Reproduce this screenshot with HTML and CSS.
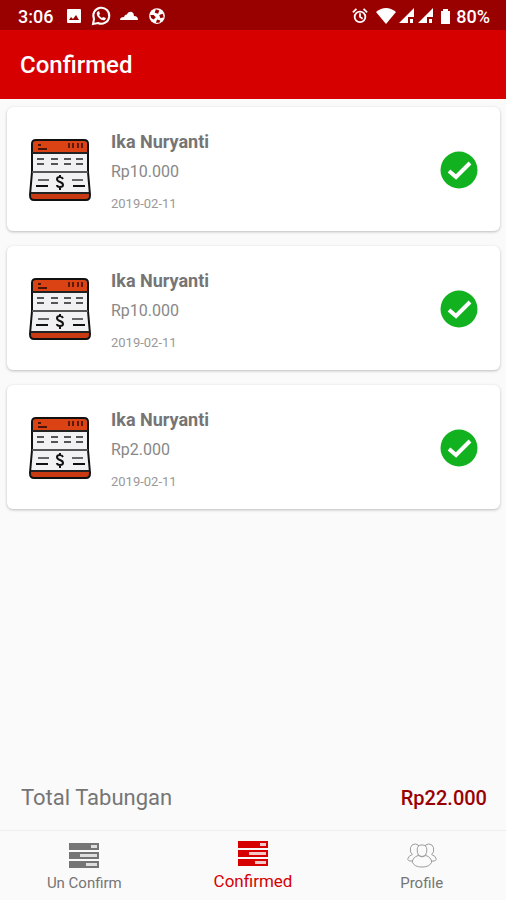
FILE: index.html
```html
<!DOCTYPE html>
<html lang="id">
<head>
<meta charset="utf-8">
<meta name="viewport" content="width=device-width, initial-scale=1">
<title>Confirmed</title>
<link rel="stylesheet" href="styles.css">
</head>
<body>
<svg class="sprite" aria-hidden="true">
  <symbol id="ledger" viewBox="0 0 62 64">
    <path d="M7 2H55Q59 2 59 6V34L61 57Q61 62 57 62H5Q1 62 1 57L3 34V6Q3 2 7 2Z" fill="#f1f1f3"/>
    <path d="M4 15V6Q4 2 8 2H54Q58 2 58 6V15Z" fill="#dc4314"/>
    <path d="M2 55H60V58Q60 62 56 62H6Q2 62 2 58Z" fill="#c93a12"/>
    <path d="M7 2H55Q59 2 59 6V34L61 57Q61 62 57 62H5Q1 62 1 57L3 34V6Q3 2 7 2Z" fill="none" stroke="#111" stroke-width="2"/>
    <path d="M3 15H59M2 55H60" stroke="#222" stroke-width="2"/>
    <path d="M3 34H59" stroke="#555" stroke-width="2"/>
    <path d="M9 11H18M9 7H12" stroke="#4a1408" stroke-width="2"/>
    <path d="M40 5V10M44 5V10M49 5V10M53 5V10" stroke="#5c1a0a" stroke-width="2"/>
    <path d="M8 21H15M22 21H29M35 21H42M47 21H54M8 26H15M22 26H29M35 26H42M47 26H54" stroke="#555" stroke-width="2"/>
    <path d="M9 42H20M43 42H54" stroke="#666" stroke-width="2"/>
    <path d="M7 48H19M44 48H56" stroke="#111" stroke-width="2"/>
    <path d="M34 41Q33 39 31 39Q28 39 28 41Q28 43 31 44Q34 45 34 47Q34 49 31 49Q28 49 28 47M31 37V40M31 49V52" fill="none" stroke="#111" stroke-width="2"/>
  </symbol>
  <symbol id="check" viewBox="0 0 38 38">
    <circle cx="19" cy="19" r="18.500" fill="#11b11f"/>
    <path d="M9 20L16 26L30 12" fill="none" stroke="#fff" stroke-width="4"/>
  </symbol>
  <symbol id="rows" viewBox="0 0 30 25">
    <path d="M0 0H30V7H0ZM0 9H30V16H0ZM0 18H30V25H0Z" fill="currentColor"/>
    <path d="M22 2H28V5H22ZM11 11H28V14H11ZM17 20H28V23H17Z" fill="#fafafa" opacity=".8"/>
  </symbol>
  <symbol id="signal" viewBox="0 0 16 16">
    <path d="M0 15L15 0V9H9V15Z" fill="#fff"/>
    <path d="M11 11H14V15H11Z" fill="#fff"/>
  </symbol>
</svg>

<header>
  <div class="status">
    <span class="clock">3:06</span>
    <svg class="image-icon" viewBox="0 0 16 16"><path fill-rule="evenodd" fill="#fff" d="M2 1H14Q15 1 15 2V14Q15 15 14 15H2Q1 15 1 14V2Q1 1 2 1ZM3 12H13L10 7L7 11L5 9Z"/></svg>
    <svg class="chat-icon" viewBox="0 0 20 20"><path d="M2 18L3 13A8 8 0 1 1 7 17Z" fill="none" stroke="#fff" stroke-width="2"/><path d="M6 6L8 5L9 8L8 9Q9 11 11 12L12 11L15 12L14 14Q11 15 8 12Q5 9 6 6Z" fill="#fff"/></svg>
    <svg class="cloud-icon" viewBox="0 0 18 10"><path d="M0 9Q0 6 4 6L5 4Q7 4 7 3Q9 0 12 1Q14 2 14 5Q18 5 18 9Z" fill="#fff"/></svg>
    <svg class="globe-icon" viewBox="0 0 16 16"><circle cx="8" cy="8" r="7" fill="#fff"/><path d="M7 2L10 3L9 6L6 5ZM2 7L5 7L7 9L5 11L3 10ZM10 7L13 6L14 9L11 10ZM8 11L11 12L10 14L7 14Z" fill="#990000"/></svg>
    <svg class="alarm-icon" viewBox="0 0 18 18"><circle cx="9" cy="10" r="6" fill="none" stroke="#fff" stroke-width="2"/><path d="M9 6V10L12 12M1 5L5 1M17 5L13 1" fill="none" stroke="#fff" stroke-width="2"/></svg>
    <svg class="wifi-icon" viewBox="0 0 20 16"><path d="M0 4Q10 -4 20 4L10 16Z" fill="#fff"/></svg>
    <svg class="signal-icon"><use href="#signal"/></svg>
    <svg class="signal-icon"><use href="#signal"/></svg>
    <svg class="battery-icon" viewBox="0 0 9 15"><path d="M0 2H2V0H7V2H9V15H0Z" fill="#fff"/></svg>
    <span>80%</span>
  </div>
  <h1>Confirmed</h1>
</header>

<main>
  <ul class="cards">
    <li class="card">
      <svg class="ledger" aria-hidden="true"><use href="#ledger"/></svg>
      <div class="details"><h2>Ika Nuryanti</h2><p class="amount">Rp10.000</p><time datetime="2019-02-11">2019-02-11</time></div>
      <svg class="check" role="img" aria-label="Confirmed"><use href="#check"/></svg>
    </li>
    <li class="card">
      <svg class="ledger" aria-hidden="true"><use href="#ledger"/></svg>
      <div class="details"><h2>Ika Nuryanti</h2><p class="amount">Rp10.000</p><time datetime="2019-02-11">2019-02-11</time></div>
      <svg class="check" role="img" aria-label="Confirmed"><use href="#check"/></svg>
    </li>
    <li class="card">
      <svg class="ledger" aria-hidden="true"><use href="#ledger"/></svg>
      <div class="details"><h2>Ika Nuryanti</h2><p class="amount">Rp2.000</p><time datetime="2019-02-11">2019-02-11</time></div>
      <svg class="check" role="img" aria-label="Confirmed"><use href="#check"/></svg>
    </li>
  </ul>
</main>

<section class="total"><span>Total Tabungan</span><strong>Rp22.000</strong></section>

<nav>
  <a href="#unconfirmed"><svg class="rows"><use href="#rows"/></svg>Un Confirm</a>
  <a class="active" href="#confirmed" aria-current="page"><svg class="rows"><use href="#rows"/></svg>Confirmed</a>
  <a href="#profile"><svg class="people" viewBox="0 0 32 26"><g fill="#fafafa" stroke="#999" stroke-width="1"><path d="M6 12Q3 10 4 5Q5 1 9 1Q13 1 13 5L12 14L7 19Q1 19 1 17Q2 13 6 12Z"/><path d="M26 12Q29 10 28 5Q27 1 23 1Q19 1 19 5L20 14L25 19Q31 19 31 17Q30 13 26 12Z"/><path d="M11 7Q11 2 16 2Q21 2 21 7Q21 14 16 14Q11 14 11 7Z"/><path d="M12 13Q16 16 20 13Q26 15 26 20Q24 25 16 25Q8 25 6 20Q6 15 12 13Z"/></g></svg>Profile</a>
</nav>
</body>
</html>
```

FILE: styles.css
```css
* {
  box-sizing: border-box;
}

body {
  margin: 0;
  min-height: 100vh;
  display: flex;
  flex-direction: column;
  background: #fafafa;
  color: #757575;
  font-family: Roboto, "Liberation Sans", sans-serif;
}

h1,
h2,
p,
ul {
  margin: 0;
  padding: 0;
}

svg {
  flex: none;
}

.sprite {
  position: absolute;
  width: 0;
  height: 0;
}

header {
  background: #d60000;
  color: #fff;
}

.status {
  display: flex;
  align-items: center;
  height: 30px;
  padding: 2px 16px 0 18px;
  background: #990000;
  font-size: 18px;
  font-weight: 500;
}

.image-icon {
  width: 16px;
  height: 16px;
  margin-left: 13px;
}

.chat-icon {
  width: 20px;
  height: 20px;
  margin-left: 9px;
}

.cloud-icon {
  width: 18px;
  height: 10px;
  margin-left: 9px;
}

.globe-icon {
  width: 18px;
  height: 18px;
  margin-left: 10px;
}

.alarm-icon {
  width: 16px;
  height: 16px;
  margin-left: auto;
}

.wifi-icon {
  width: 20px;
  height: 16px;
  margin-left: 8px;
}

.signal-icon {
  width: 16px;
  height: 16px;
  margin-left: 3px;
}

.battery-icon {
  width: 9px;
  height: 15px;
  margin: 0 6px 0 7px;
}

h1 {
  padding: 19px 20px 17px;
  font-size: 24px;
  line-height: 33px;
  font-weight: 500;
}

main {
  flex: 1;
  padding: 8px 6px 8px 7px;
}

.cards {
  display: grid;
  gap: 15px;
  list-style: none;
}

.card {
  display: flex;
  align-items: center;
  padding: 21px 22px 20px 22px;
  border-radius: 6px;
  background: #fff;
  box-shadow: 0 1px 3px rgba(0, 0, 0, 0.25);
}

.ledger {
  width: 62px;
  height: 64px;
}

.details {
  flex: 1;
  margin-left: 20px;
}

h2 {
  font-size: 18px;
  line-height: 28px;
  font-weight: 700;
}

.amount {
  margin: 4px 0 13px;
  font-size: 16px;
  line-height: 24px;
  color: #888;
}

time {
  display: block;
  font-size: 13px;
  line-height: 14px;
  color: #999;
}

.check {
  width: 38px;
  height: 38px;
}

.total {
  display: flex;
  align-items: center;
  justify-content: space-between;
  padding: 17px 19px 15px 21px;
  font-size: 22px;
  line-height: 34px;
}

.total strong {
  color: #990000;
  font-size: 20px;
  font-weight: 500;
}

nav {
  display: grid;
  grid-template-columns: repeat(3, 1fr);
  height: 70px;
  border-top: 1px solid #eee;
  background: #fafafa;
}

nav a {
  display: flex;
  flex-direction: column;
  align-items: center;
  gap: 5px;
  padding-top: 12px;
  color: #757575;
  font-size: 15px;
  line-height: 20px;
  text-decoration: none;
}

nav .active {
  padding-top: 10px;
  color: #d60000;
  font-size: 17px;
}

.rows {
  width: 30px;
  height: 25px;
}

.people {
  width: 32px;
  height: 25px;
}
```
